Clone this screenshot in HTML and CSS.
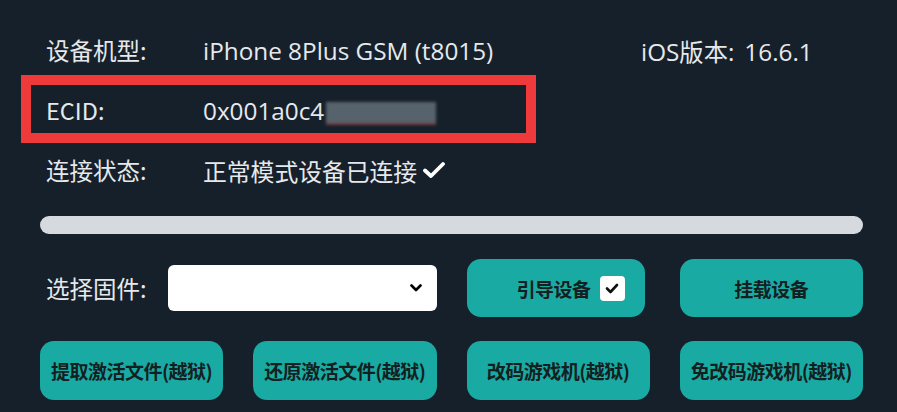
FILE: index.html
```html
<!DOCTYPE html>
<html lang="zh-CN">
<head>
    <meta charset="UTF-8">
    <meta name="viewport" content="width=device-width, initial-scale=1.0">
    <title>设备工具</title>
    <link rel="stylesheet" href="styles.css">
</head>
<body>

<div class="panel">
    <!-- Device info -->
    <div class="info">
        <div class="info-row">
            <span class="label">设备机型:</span>
            <span class="value">iPhone 8Plus GSM (t8015)</span>
            <span class="extra">iOS版本:<span class="version">16.6.1</span></span>
        </div>
        <div class="info-row">
            <span class="label">ECID:</span>
            <span class="value">0x001a0c4<span class="masked"></span></span>
        </div>
        <div class="info-row">
            <span class="label">连接状态:</span>
            <span class="value status">正常模式设备已连接
                <svg class="tick" width="22" height="18" viewBox="0 0 22 18">
                    <path d="M2 9.5 L8 15 L20 3" fill="none" stroke="#fff" stroke-width="3.8" stroke-linecap="round" stroke-linejoin="round"/>
                </svg>
            </span>
        </div>
        <!-- highlight around ECID -->
        <div class="highlight"></div>
    </div>

    <div class="progress"></div>

    <!-- Actions -->
    <div class="actions">
        <div class="firmware">
            <span class="label">选择固件:</span>
            <div class="select">
                <svg width="12" height="8" viewBox="0 0 12 8">
                    <path d="M1.5 1.5 L6 6 L10.5 1.5" fill="none" stroke="#000" stroke-width="2.6" stroke-linecap="round" stroke-linejoin="round"/>
                </svg>
            </div>
        </div>
        <button class="btn btn-boot">引导设备
            <span class="check">
                <svg width="14" height="11" viewBox="0 0 14 11">
                    <path d="M2 5.5 L5.5 9 L12 2" fill="none" stroke="#111" stroke-width="2.6" stroke-linecap="round" stroke-linejoin="round"/>
                </svg>
            </span>
        </button>
        <button class="btn">挂载设备</button>

        <button class="btn btn-tall">提取激活文件(越狱)</button>
        <button class="btn btn-tall">还原激活文件(越狱)</button>
        <button class="btn btn-tall">改码游戏机(越狱)</button>
        <button class="btn btn-tall">免改码游戏机(越狱)</button>
    </div>
</div>

</body>
</html>
```

FILE: styles.css
```css
body {
    margin: 0;
    padding: 0;
    background-color: #16202b;
    color: #e6e9ec;
    font-family: "Noto Sans CJK SC", "Noto Sans", sans-serif;
}
.panel {
    padding: 20px 34px 0 40px;
}
.info {
    position: relative;
    padding-left: 6px;
}
.info-row {
    display: grid;
    grid-template-columns: 157px 438px auto;
    align-items: center;
    height: 60px;
    font-size: 23.5px;
}
.value,
.extra {
    font-family: "Open Sans", "Noto Sans CJK SC", sans-serif;
    font-size: 24.3px;
}
.version {
    margin-left: 10px;
}
.status {
    font-family: "Noto Sans CJK SC", sans-serif;
    font-size: 23.8px;
    display: flex;
    align-items: center;
    gap: 6px;
}
.masked {
    display: inline-block;
    width: 110px;
    height: 21px;
    margin-left: 2px;
    vertical-align: middle;
    background-color: #56626c;
    border-bottom: 2px solid #7a3a40;
    filter: blur(1.5px);
}
.highlight {
    position: absolute;
    left: -19px;
    top: 55px;
    width: 495px;
    height: 48px;
    border: 10px solid #ee3a3a;
}
.progress {
    margin-top: 16px;
    height: 18px;
    border-radius: 9px;
    background-color: #d6dadf;
}
.actions {
    display: grid;
    grid-template-columns: repeat(4, 1fr);
    column-gap: 30px;
    row-gap: 24px;
    margin-top: 25px;
}
.firmware {
    grid-column: span 2;
    display: flex;
    align-items: center;
    padding-left: 6px;
    font-size: 23.5px;
}
.firmware .label {
    width: 123px;
}
.select {
    width: 272px;
    height: 46px;
    background-color: #fff;
    border-radius: 6px;
    display: flex;
    align-items: center;
    justify-content: flex-end;
    padding-right: 15px;
    box-sizing: border-box;
}
.btn {
    height: 58px;
    border: none;
    border-radius: 14px;
    background-color: #19aba3;
    color: #14201f;
    font-family: "Noto Sans CJK SC", sans-serif;
    font-size: 19px;
    font-weight: bold;
    letter-spacing: -0.5px;
    padding: 0;
    display: flex;
    align-items: center;
    justify-content: center;
}
.btn-boot {
    width: 178px;
    padding-left: 30px;
    gap: 9px;
}
.btn-tall {
    height: 59px;
}
.check {
    width: 25px;
    height: 25px;
    background-color: #fff;
    border-radius: 4px;
    display: flex;
    align-items: center;
    justify-content: center;
}
```
